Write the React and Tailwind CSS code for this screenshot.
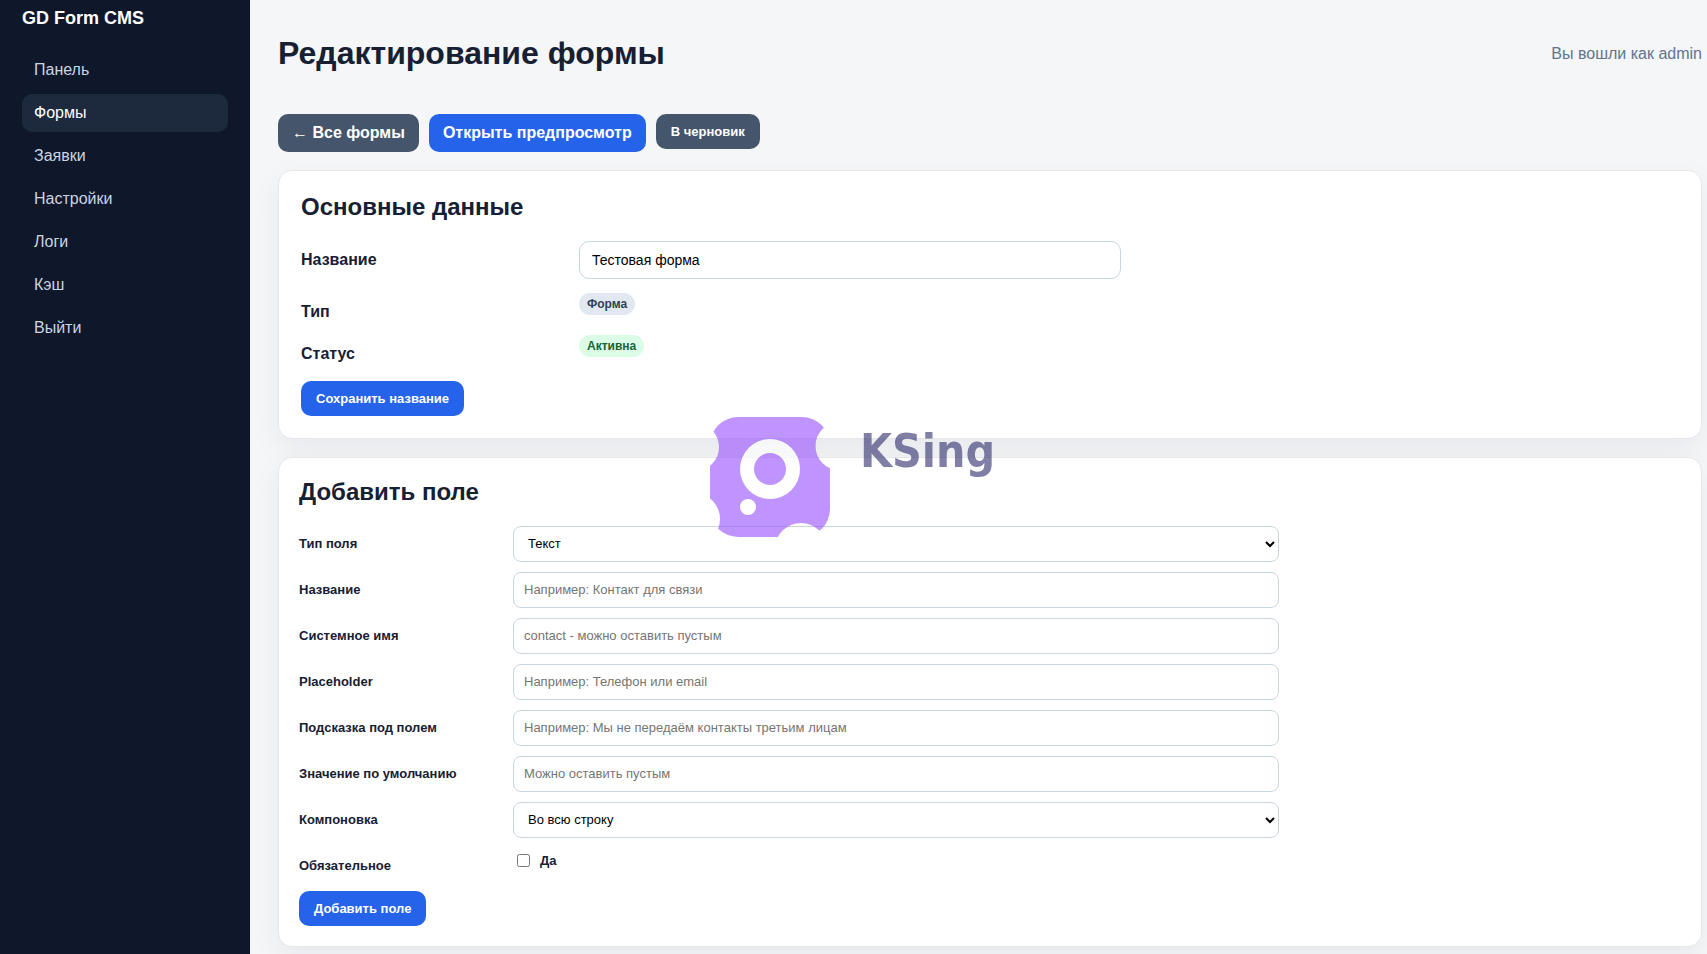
import { useState } from "react";

const navItems = [
  { title: "Панель", href: "#dashboard" },
  { title: "Формы", href: "#forms", active: true },
  { title: "Заявки", href: "#requests" },
  { title: "Настройки", href: "#settings" },
  { title: "Логи", href: "#logs" },
  { title: "Кэш", href: "#cache" },
  { title: "Выйти", href: "#logout" },
];

const fieldRows = [
  { name: "type", label: "Тип поля", options: ["Текст", "Email", "Телефон"] },
  { name: "title", label: "Название", placeholder: "Например: Контакт для связи" },
  { name: "slug", label: "Системное имя", placeholder: "contact - можно оставить пустым" },
  { name: "placeholder", label: "Placeholder", placeholder: "Например: Телефон или email" },
  { name: "hint", label: "Подсказка под полем", placeholder: "Например: Мы не передаём контакты третьим лицам" },
  { name: "default", label: "Значение по умолчанию", placeholder: "Можно оставить пустым" },
  { name: "layout", label: "Компоновка", options: ["Во всю строку", "Половина строки"] },
];

const controlClass = "w-full h-9 px-2.5 pb-0.5 border border-slate-300 rounded-lg bg-white text-[13px] text-black placeholder:text-[#757575]";
const buttonClass = "rounded-[10px] px-[15px] py-2.5 font-bold text-[13px] leading-[15px] text-white";
const cardClass = "bg-white border border-gray-200 rounded-[14px] shadow-[0_10px_30px_rgba(15,23,42,0.06)]";

function Sidebar() {
  return (
    <aside className="relative z-10 w-[250px] shrink-0 bg-slate-900 px-[22px] pt-2">
      <div className="text-lg leading-5 font-bold text-white mb-[23px]">GD Form CMS</div>
      <nav className="flex flex-col gap-[5px]">
        {navItems.map((item) => (
          <a
            key={item.href}
            href={item.href}
            className={`block rounded-[10px] px-3 py-2.5 leading-[18px] ${
              item.active ? "bg-slate-800 text-white" : "text-slate-300"
            }`}
          >
            {item.title}
          </a>
        ))}
      </nav>
    </aside>
  );
}

function FieldRow({ row }) {
  const id = `field-${row.name}`;

  return (
    <>
      <label htmlFor={id} className="pt-2.5 text-[13px] leading-[15px] font-bold">
        {row.label}
      </label>
      {row.options ? (
        <select id={id} name={row.name} className={controlClass}>
          {row.options.map((option) => (
            <option key={option}>{option}</option>
          ))}
        </select>
      ) : (
        <input id={id} name={row.name} type="text" placeholder={row.placeholder} className={controlClass} />
      )}
    </>
  );
}

function Watermark() {
  return (
    <div className="fixed inset-0 z-20 flex items-center justify-center pointer-events-none opacity-60">
      <div className="flex items-start gap-[30px] pr-0.5">
        <svg width="120" height="120" viewBox="0 0 120 120" aria-hidden="true">
          <mask id="bites">
            <rect width="120" height="120" rx="28" fill="white" />
            <circle cx="-15" cy="30" r="24" fill="black" />
            <circle cx="130" cy="29" r="24.5" fill="black" />
            <circle cx="-16" cy="102" r="26" fill="black" />
            <circle cx="91" cy="132" r="26" fill="black" />
          </mask>
          <rect width="120" height="120" fill="#964eff" mask="url(#bites)" />
          <circle cx="60" cy="52" r="30" fill="white" />
          <circle cx="60" cy="52" r="16" fill="#964eff" />
          <circle cx="38" cy="90" r="8" fill="white" />
        </svg>
        <span className="font-['DejaVu_Sans_Condensed','DejaVu_Sans',sans-serif] text-[46px] leading-[68px] font-bold text-[#2d2b6b]">
          KSing
        </span>
      </div>
    </div>
  );
}

export default function App() {
  const [name, setName] = useState("Тестовая форма");
  const [required, setRequired] = useState(false);

  const handleSubmit = (e) => {
    e.preventDefault();
  };

  return (
    <div className="flex min-h-screen bg-[#f4f6f8] text-[#172033] font-['Liberation_Sans',Arial,sans-serif]">
      <Sidebar />

      <main className="flex-1 min-w-0 pl-7 pr-[5px] pt-[35px]">
        <header className="flex items-center justify-between mb-[42px]">
          <h1 className="text-[32px] leading-[37px] font-bold">Редактирование формы</h1>
          <div className="text-slate-500">Вы вошли как admin</div>
        </header>

        <div className="flex items-start gap-2.5 mb-[18px]">
          <a href="#forms" className="rounded-[10px] px-3.5 py-2.5 leading-[18px] font-bold text-white bg-slate-600">
            ← Все формы
          </a>
          <a href="#preview" className="rounded-[10px] px-3.5 py-2.5 leading-[18px] font-bold text-white bg-[#2563eb]">
            Открыть предпросмотр
          </a>
          <button type="button" className={`${buttonClass} bg-slate-600`}>
            В черновик
          </button>
        </div>

        {/* Основные данные */}
        <form onSubmit={handleSubmit} className={`${cardClass} p-[22px] mb-[18px]`}>
          <h2 className="text-2xl leading-[27px] font-bold mb-[21px]">Основные данные</h2>
          <div className="grid grid-cols-[260px_1fr] items-start gap-x-[18px] gap-y-3.5 max-w-[820px] leading-[18px]">
            <label htmlFor="form-name" className="pt-2.5 font-bold">Название</label>
            <input
              id="form-name"
              type="text"
              value={name}
              onChange={(e) => setName(e.target.value)}
              className="w-full border border-slate-300 rounded-[10px] px-3 py-2.5 text-sm leading-4 text-black"
            />
            <div className="pt-2.5 font-bold">Тип</div>
            <div className="flex">
              <span className="rounded-full bg-slate-200 text-slate-700 px-2 py-1 text-xs leading-[14px] font-bold">Форма</span>
            </div>
            <div className="pt-2.5 font-bold">Статус</div>
            <div className="flex">
              <span className="rounded-full bg-green-100 text-[#166534] px-2 py-1 text-xs leading-[14px] font-bold">Активна</span>
            </div>
          </div>
          <button type="submit" className={`${buttonClass} bg-[#2563eb] mt-[18px]`}>
            Сохранить название
          </button>
        </form>

        {/* Добавить поле */}
        <form onSubmit={handleSubmit} className={`${cardClass} p-5`}>
          <h2 className="text-2xl leading-[27px] font-bold mb-[21px]">Добавить поле</h2>
          <div className="grid grid-cols-[200px_1fr] items-start gap-x-3.5 gap-y-2.5 max-w-[980px]">
            {fieldRows.map((row) => (
              <FieldRow key={row.name} row={row} />
            ))}
            <div className="pt-2.5 text-[13px] leading-[15px] font-bold">Обязательное</div>
            <label className="flex items-center gap-2.5 pt-[5px] pl-1 text-[13px] leading-[15px] font-bold">
              <input
                type="checkbox"
                checked={required}
                onChange={(e) => setRequired(e.target.checked)}
                className="w-[13px] h-[13px]"
              />
              Да
            </label>
          </div>
          <button type="submit" className={`${buttonClass} bg-[#2563eb] mt-[18px]`}>
            Добавить поле
          </button>
        </form>
      </main>

      <Watermark />
    </div>
  );
}
